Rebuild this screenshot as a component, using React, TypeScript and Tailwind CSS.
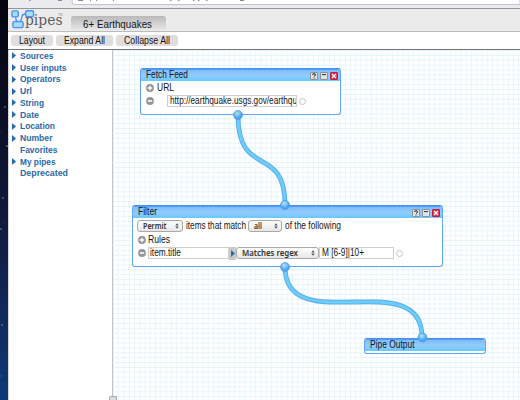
import React from "react";

// name, rendered width, expandable
const categories: [string, number, boolean][] = [
  ["Sources", 33.5, true],
  ["User inputs", 46.5, true],
  ["Operators", 40.5, true],
  ["Url", 12, true],
  ["String", 24, true],
  ["Date", 19, true],
  ["Location", 35, true],
  ["Number", 32.5, true],
  ["Favorites", 37.5, false],
  ["My pipes", 35.5, true],
  ["Deprecated", 48, false],
];

const stars = [
  [5, 107, 0.9], [7, 146, 1], [1, 131, 0.5], [3, 198, 0.9], [4, 222, 0.6], [1, 229, 0.9],
  [2, 325, 0.9], [1, 376, 0.7], [4, 347, 0.4], [6, 289, 0.4], [1, 276, 0.4], [3, 356, 0.4],
];

// Text stretched to an exact width so labels keep their metrics.
function Label({ x, y, w, size = 10, children, weight, fill = "#141414", family }: {
  x: number; y: number; w: number; size?: number; children: string; weight?: number; fill?: string; family?: string;
}) {
  return (
    <text x={x} y={y} textLength={w} lengthAdjust="spacingAndGlyphs" fontSize={size} fontWeight={weight} fill={fill}
      fontFamily={family ?? "Liberation Sans, sans-serif"}>{children}</text>
  );
}

function Word({ w, children, base = 10.4, ...rest }: {
  w: number; children: string; base?: number; size?: number; family?: string; weight?: number; fill?: string;
}) {
  return (
    <svg width={w} height="14" className="block shrink-0 overflow-visible">
      <Label x={0} y={base} w={w} {...rest}>{children}</Label>
    </svg>
  );
}

function WindowButtons() {
  return (
    <div className="flex gap-[2px]">
      <svg width="8" height="8"><rect x=".5" y=".5" width="7" height="7" rx=".5" fill="#e2e2e2" stroke="#8b9197" /><path d="M2.5 3Q2.5 1.7 4 1.7T5.5 3Q5.5 3.7 4 4.4M4 5.5v1" fill="none" stroke="#222" /></svg>
      <svg width="8" height="8"><rect x=".5" y=".5" width="7" height="7" rx=".5" fill="#e2e2e2" stroke="#8b9197" /><path d="M2 2.6h4" stroke="#333" /></svg>
      <svg width="8" height="8"><rect x=".5" y=".5" width="7" height="7" rx=".5" fill="#e0304c" stroke="#c01c3c" /><path d="M2 2l4 4M6 2L2 6" stroke="#fff" strokeWidth="1.3" /></svg>
    </div>
  );
}

function Module({ title, titleWidth, buttons, className, children }: {
  title: string; titleWidth: number; buttons?: boolean; className: string; children?: React.ReactNode;
}) {
  return (
    <section className={"absolute overflow-hidden rounded-[3px] border border-[#62a5f3] border-t-[#4a8eee] bg-white " + className}>
      <header className="flex h-[12px] items-center justify-between border-t border-[#4f9df8] bg-gradient-to-b from-[#7dbdfb] via-[#92cbfd] to-[#66c9ff] pr-[2px] pl-[5px]">
        <Word w={titleWidth} base={9.3}>{title}</Word>
        {buttons && <WindowButtons />}
      </header>
      {children}
    </section>
  );
}

function Round({ plus }: { plus?: boolean }) {
  return (
    <svg width="8" height="8" className="shrink-0">
      <circle cx="4" cy="4" r="3.9" fill="#959595" />
      <path d={plus ? "M1.8 4h4.4M4 1.8v4.4" : "M1.8 4h4.4"} stroke="#fff" strokeWidth="1.3" />
    </svg>
  );
}

function Ring() {
  return <span className="size-[7px] shrink-0 rounded-full border border-[#c4c4c4] bg-white" />;
}

function Select({ w, textWidth, children }: { w: string; textWidth: number; children: string }) {
  return (
    <div className={"flex h-[12px] shrink-0 items-center justify-between rounded-[3px] border border-[#a8a8a8] bg-gradient-to-b from-white to-[#e6e6e6] pr-[3px] pl-[5px] " + w}>
      <Word w={textWidth} size={8.5} base={10.1} weight={600} fill="#333" family="Noto Sans, sans-serif">{children}</Word>
      <svg width="4" height="6"><path d="M.3 2.4L2 .3l1.7 2.1zM.3 3.6L2 5.7l1.7-2.1z" fill="#555" /></svg>
    </div>
  );
}

function Wires() {
  const curves = ["M238 115C238 180 285 143 285 205", "M285 267C285 340 422 264 422 337"];
  const ends = [[238, 115], [285, 205], [285, 267], [422.5, 337.5]];
  return (
    <svg width="520" height="400" className="pointer-events-none absolute top-0 left-0">
      <defs>
        <radialGradient id="knob" cx=".42" cy=".32">
          <stop offset="0" stopColor="#b5e2ff" />
          <stop offset="1" stopColor="#4ba5f2" />
        </radialGradient>
      </defs>
      {curves.map((d) => (
        <g key={d} fill="none">
          <path d={d} stroke="#5aaeeb" strokeWidth="4.8" />
          <path d={d} stroke="#6ccefd" strokeWidth="2.8" />
        </g>
      ))}
      {ends.map(([x, y]) => <circle key={x + "-" + y} cx={x} cy={y} r="4.5" fill="url(#knob)" stroke="#4796e5" strokeWidth=".7" />)}
    </svg>
  );
}

function Logo() {
  return (
    <svg width="56" height="22" className="block overflow-visible">
      <g fill="none" stroke="#4a8ff2" strokeWidth="1.4">
        <path d="M4.5 8.3Q4.8 10.5 6 12.3M14.5 5Q11 5 10.8 8.5Q10.6 11 9 12.3" />
        <g fill="#a5ddfb">
          <rect x=".9" y="1.9" width="6.4" height="6" rx="1.6" />
          <rect x="14.6" y="1.7" width="8" height="6" rx="1.6" />
          <rect x="1.9" y="12.6" width="10.2" height="6" rx="1.6" />
        </g>
      </g>
      <Label x={14} y={16} w={37.5} size={15.5} fill="#5c6165" family="DejaVu Serif, serif">pipes</Label>
      <Label x={47} y={6.6} w={4.5} size={3.5} fill="#8c8c8c">TM</Label>
    </svg>
  );
}

const toolbar = [
  { label: "Layout", box: "w-[42px]", text: 26 },
  { label: "Expand All", box: "w-[57px]", text: 41 },
  { label: "Collapse All", box: "w-[62px]", text: 46 },
];

export default function App() {
  return (
    <div className="relative flex h-[400px] w-[520px] overflow-hidden bg-white font-['Liberation_Sans',sans-serif]">
      <div className="w-[8px] shrink-0 bg-gradient-to-b from-[#05060e] via-[#101637] to-[#0c3978]">
        <svg width="8" height="400" className="block">
          {stars.map(([x, y, r]) => <circle key={y} cx={x} cy={y} r={r} fill="#8390ad" opacity={r * 0.7} />)}
        </svg>
      </div>
      <div className="flex min-w-0 flex-1 flex-col">
        <div className="h-[9px] shrink-0 border-b border-[#939598] bg-[#ebebef]">
          <svg width="512" height="8" className="block">
            <path d="M512-2H70q-6 0-6 3.5t4 3h444z" fill="#fff" stroke="#c3c4c8" />
            <g fill="#8a8a8a">
              <rect x="21" y="0" width="1.5" height="1" /><rect x="50" y="0" width="4" height="1" />
              <rect x="70" y="0" width="5" height="1" /><rect x="82" y="0" width="1" height="1" />
              <rect x="88" y="0" width="1" height="1" /><rect x="105" y="0" width="1" height="1" />
              <rect x="162" y="0" width="1.5" height="1" /><rect x="170" y="0" width="1.5" height="1" />
              <rect x="185" y="0" width="1.5" height="1" /><rect x="190" y="0" width="1.5" height="1" />
              <rect x="198" y="0" width="1.5" height="1" /><rect x="232" y="0" width="4" height="1" />
            </g>
          </svg>
        </div>
        <header className="flex h-[23px] shrink-0 items-end border-b border-[#bcbcbc] bg-[#ebebeb] pl-[3px]">
          <div className="h-[22px] w-[60px]"><Logo /></div>
          <div className="flex h-[15px] w-[95px] items-center rounded-t-[3px] bg-gradient-to-b from-[#b9b9b9] to-[#ebebeb] pl-[12px]">
            <Word w={69} size={10.5} base={11}>6+ Earthquakes</Word>
          </div>
        </header>
        <nav className="flex h-[18px] shrink-0 items-center gap-[3px] border-b border-[#777] bg-white pl-[3px]">
          {toolbar.map((b) => (
            <button key={b.label} className={"flex h-[11px] items-center justify-center rounded-[3px] bg-[#e1dddd] " + b.box}>
              <Word w={b.text}>{b.label}</Word>
            </button>
          ))}
        </nav>
        <main className="flex min-h-0 flex-1">
          <aside className="w-[105px] shrink-0 border-r border-r-[#c2c2c6] border-l border-l-[#d6d6da] bg-white">
            {categories.map(([name, width, arrow]) => (
              <div key={name} className="flex h-[11.75px] items-center gap-[4px] pl-[3px]">
                <svg width="4" height="7" className="shrink-0">{arrow && <path d="M0 0l4 3.5L0 7z" fill="#236aae" />}</svg>
                <Word w={width} size={9.4} base={9.7} weight={700} fill="#2b69a8">{name}</Word>
              </div>
            ))}
          </aside>
          <div className="flex-1 bg-white bg-[linear-gradient(90deg,#e8f5fb_1px,transparent_1px),linear-gradient(#e3f4fb_1px,transparent_1px)] bg-[size:5.27px_4.88px]" />
        </main>
      </div>

      <Module title="Fetch Feed" titleWidth={42} buttons className="top-[68px] left-[140px] h-[47px] w-[201px]">
        <div className="flex h-[13px] items-center gap-[3px] pl-[5px]"><Round plus /><Word w={17}>URL</Word></div>
        <div className="flex h-[14px] items-center pl-[5px]">
          <Round />
          <div className="mr-[2px] ml-[13px] flex h-[12px] w-[130px] items-center overflow-hidden border border-[#cfcfcf] pl-[2px]">
            <Word w={127}>http://earthquake.usgs.gov/earthqu</Word>
          </div>
          <Ring />
        </div>
      </Module>

      <Module title="Filter" titleWidth={19} buttons className="top-[205px] left-[132px] h-[62px] w-[311px]">
        <div className="flex h-[16px] items-center pl-[4px]">
          <Select w="w-[46px]" textWidth={23.5}>Permit</Select>
          <div className="pr-[2px] pl-[3px]"><Word w={60}>items that match</Word></div>
          <Select w="w-[34px]" textWidth={8}>all</Select>
          <div className="pl-[3px]"><Word w={56}>of the following</Word></div>
        </div>
        <div className="flex h-[12px] items-center gap-[2px] pl-[5px]"><Round plus /><Word w={22}>Rules</Word></div>
        <div className="flex h-[14px] items-center pl-[5px]">
          <Round />
          <div className="ml-[2px] flex h-[12px] w-[81px] items-center border border-[#cfcfcf] pl-px"><Word w={31}>item.title</Word></div>
          <div className="flex h-[13px] w-[7px] items-center justify-center bg-[#c9c9c9]"><svg width="4" height="7"><path d="M0 0l4 3.5L0 7z" fill="#236aae" /></svg></div>
          <Select w="w-[83px]" textWidth={56}>Matches regex</Select>
          <div className="mr-[2px] flex h-[12px] w-[75px] items-center border border-[#cfcfcf] pl-[2px]"><Word w={42}>M [6-9]|10+</Word></div>
          <Ring />
        </div>
      </Module>

      <Module title="Pipe Output" titleWidth={44.5} className="top-[338px] left-[364px] h-[16px] w-[122px]" />
      <Wires />
      <div className="absolute bottom-0 left-[109px] h-[4px] w-[8px] rounded-t-[2px] border border-b-0 border-[#aaa] bg-[#ddd]" />
    </div>
  );
}
